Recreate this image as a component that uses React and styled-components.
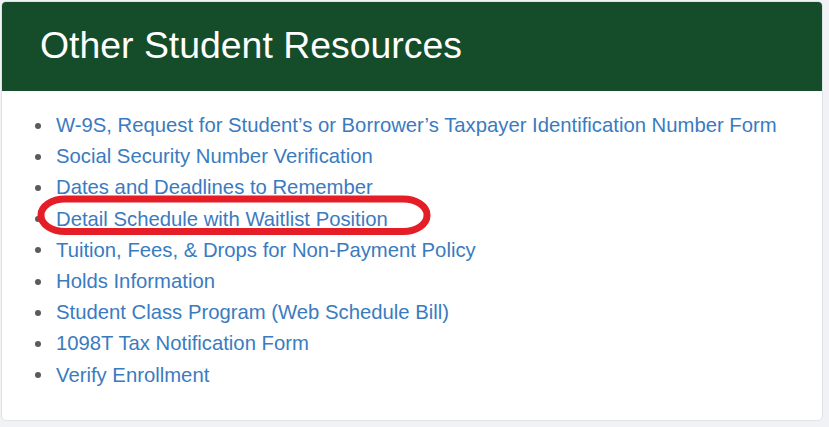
import React from 'react';
import styled, { createGlobalStyle } from 'styled-components';

const Global = createGlobalStyle`
  html, body {
    margin: 0;
    padding: 0;
    background: #f1f2f5;
    font-family: "Liberation Sans", Arial, sans-serif;
  }
`;

const Page = styled.div`
  padding: 1px 6px 0 1px;
`;

const Panel = styled.section`
  width: 822px;
  height: 420px;
  box-sizing: border-box;
  background: #fff;
  border: 1px solid #dfe2e7;
  border-radius: 5px;
  overflow: hidden;
`;

const Header = styled.h2`
  margin: 0;
  height: 89px;
  display: flex;
  align-items: center;
  padding: 0 0 2px 38px;
  box-sizing: border-box;
  background: #154d2b;
  color: #fff;
  font-size: 37.4px;
  font-weight: normal;
`;

const List = styled.ul`
  list-style: none;
  margin: 0;
  padding: 19px 0 0 33px;
`;

const Item = styled.li`
  position: relative;
  display: flex;
  align-items: center;
  gap: 15px;
  height: 31.2px;
  font-size: 20.3px;

  &::before {
    content: '';
    width: 6px;
    height: 6px;
    border-radius: 50%;
    background: #5b5b5b;
    flex-shrink: 0;
  }
`;

const Link = styled.a`
  color: #3a7bc0;
  text-decoration: none;
  white-space: nowrap;
`;

// hand-drawn red highlight round one link
const Highlight = styled.svg`
  position: absolute;
  left: 0;
  top: -10px;
  pointer-events: none;
`;

const links = [
  'W-9S, Request for Student’s or Borrower’s Taxpayer Identification Number Form',
  'Social Security Number Verification',
  'Dates and Deadlines to Remember',
  'Detail Schedule with Waitlist Position',
  'Tuition, Fees, & Drops for Non-Payment Policy',
  'Holds Information',
  'Student Class Program (Web Schedule Bill)',
  '1098T Tax Notification Form',
  'Verify Enrollment',
];

export default function App() {
  return (
    <>
      <Global />
      <Page>
        <Panel>
          <Header>Other Student Resources</Header>
          <List>
            {links.map((label, i) => (
              <Item key={label}>
                <Link href="#">{label}</Link>
                {i === 3 && (
                  <Highlight width="400" height="46" viewBox="0 0 400 46">
                    <rect x="6" y="5" width="386" height="32.5" rx="24" ry="16" fill="none" stroke="#e51d27" strokeWidth="7" />
                  </Highlight>
                )}
              </Item>
            ))}
          </List>
        </Panel>
      </Page>
    </>
  );
}
